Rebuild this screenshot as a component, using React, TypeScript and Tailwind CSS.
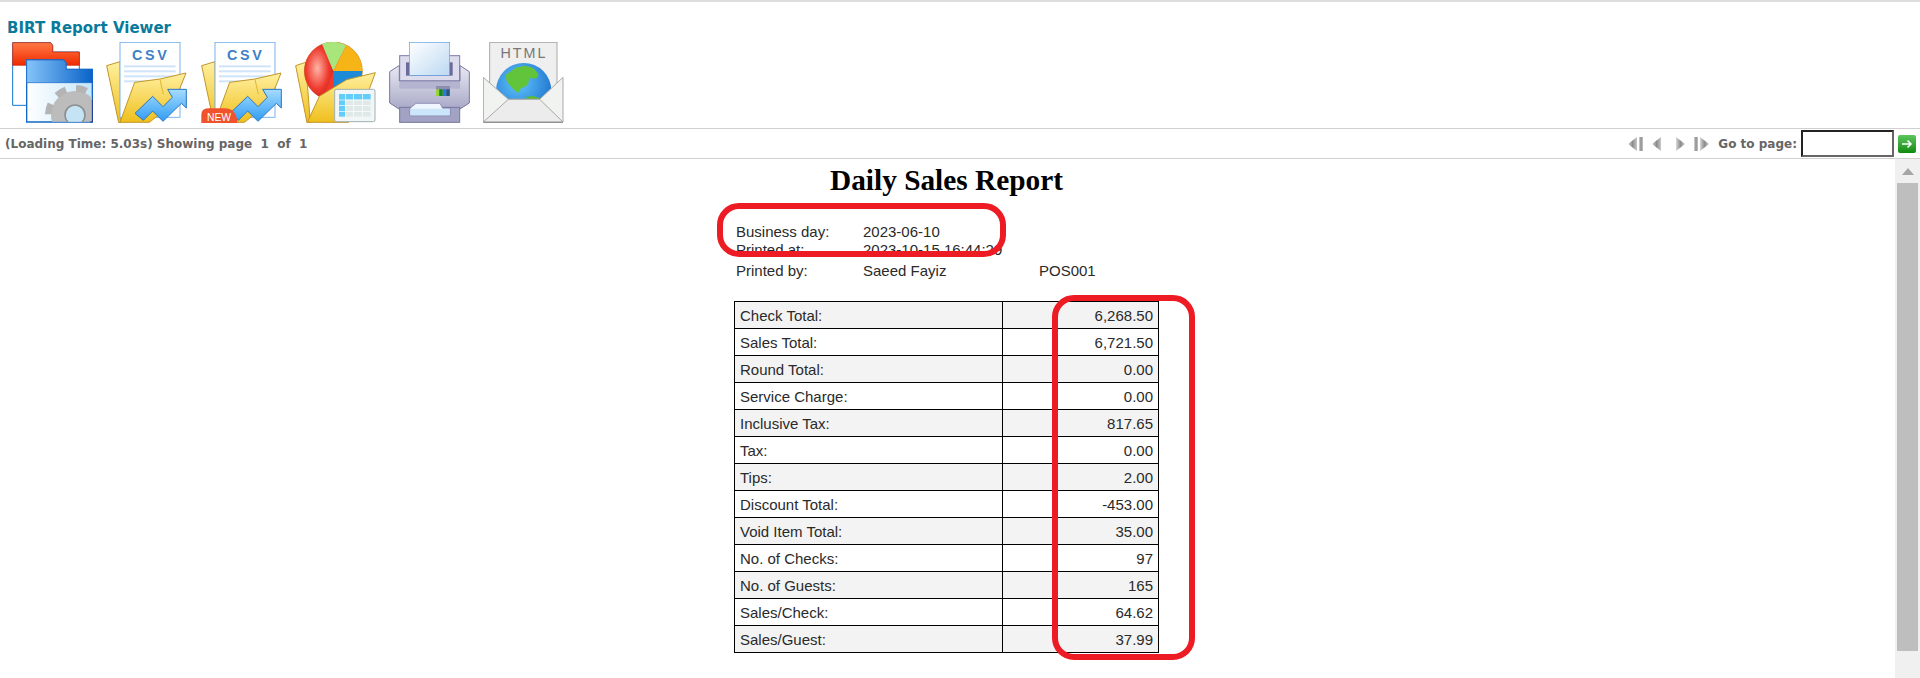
const rows = [
  ['Check Total:', '6,268.50'],
  ['Sales Total:', '6,721.50'],
  ['Round Total:', '0.00'],
  ['Service Charge:', '0.00'],
  ['Inclusive Tax:', '817.65'],
  ['Tax:', '0.00'],
  ['Tips:', '2.00'],
  ['Discount Total:', '-453.00'],
  ['Void Item Total:', '35.00'],
  ['No. of Checks:', '97'],
  ['No. of Guests:', '165'],
  ['Sales/Check:', '64.62'],
  ['Sales/Guest:', '37.99'],
]

const Defs = () => (
  <svg width="0" height="0" className="absolute">
    <defs>
      <linearGradient id="yellow" x1="0" y1="0" x2="0" y2="1">
        <stop offset="0" stopColor="#fff0a0" />
        <stop offset="1" stopColor="#efbf1c" />
      </linearGradient>
      <linearGradient id="red" x1="0" y1="0" x2="0" y2="1">
        <stop offset="0" stopColor="#ff7a45" />
        <stop offset="1" stopColor="#f02a00" />
      </linearGradient>
      <linearGradient id="blue" x1="0" y1="0" x2="1" y2="0">
        <stop offset="0" stopColor="#86c4fa" />
        <stop offset="1" stopColor="#0a63c8" />
      </linearGradient>
      <linearGradient id="pane" x1="0" y1="0" x2="1" y2="0">
        <stop offset="0" stopColor="#ffffff" />
        <stop offset="1" stopColor="#c5e6fb" />
      </linearGradient>
      <linearGradient id="arrow" x1="0" y1="0" x2="0" y2="1">
        <stop offset="0" stopColor="#a6dcff" />
        <stop offset="1" stopColor="#2f9cf2" />
      </linearGradient>
      <linearGradient id="paper" x1="0" y1="0" x2="1" y2="1">
        <stop offset="0" stopColor="#ffffff" />
        <stop offset="1" stopColor="#bcd9f2" />
      </linearGradient>
      <linearGradient id="printer" x1="0" y1="0" x2="0" y2="1">
        <stop offset="0" stopColor="#e8e8f2" />
        <stop offset="1" stopColor="#a9a9c8" />
      </linearGradient>
      <linearGradient id="navarrow" x1="0" y1="0" x2="1" y2="0">
        <stop offset="0" stopColor="#d8d8d8" />
        <stop offset="0.5" stopColor="#8c8c8c" />
        <stop offset="1" stopColor="#c8c8c8" />
      </linearGradient>
      <radialGradient id="globe" cx="0.4" cy="0.35" r="0.8">
        <stop offset="0" stopColor="#62c4ff" />
        <stop offset="1" stopColor="#0f62c0" />
      </radialGradient>
      <radialGradient id="pieRed" cx="0.45" cy="0.45" r="0.7">
        <stop offset="0" stopColor="#ffb4a6" />
        <stop offset="0.55" stopColor="#ee3a2e" />
        <stop offset="1" stopColor="#c01c12" />
      </radialGradient>
      <clipPath id="gearClip">
        <rect x="80" y="180" width="196" height="185" />
      </clipPath>
    </defs>
  </svg>
)

const FolderIcon = () => (
  <svg viewBox="36 126 243 243" className="w-[81px] h-[81px] shrink-0">
    <path d="M38 128h114l6 8v20h80v160H38z" fill="#fff" stroke="#1876d2" strokeWidth="3" />
    <path d="M38 128h114l6 8v20h80v40H38z" fill="url(#red)" stroke="#d62000" strokeWidth="2" />
    <path d="M80 180h110l8 8v20h79v158H80z" fill="url(#pane)" stroke="#1268c8" strokeWidth="4" />
    <path d="M80 180h110l8 8v20h79v40H80z" fill="url(#blue)" stroke="#1268c8" strokeWidth="2" />
    <g clipPath="url(#gearClip)">
      <circle cx="225" cy="345" r="72" fill="#bcbcbc" />
      <circle cx="225" cy="345" r="80" fill="none" stroke="#b4b4b4" strokeWidth="20" strokeDasharray="32 31" />
      <circle cx="225" cy="345" r="30" fill="#c4e4f6" stroke="#8f8f8f" strokeWidth="5" />
    </g>
    <path d="M270 366h7V300" fill="none" stroke="#263a8a" strokeWidth="3" />
  </svg>
)

const CsvIcon = ({ isNew }: { isNew?: boolean }) => (
  <svg viewBox="318 126 243 243" className="w-[81px] h-[81px] shrink-0">
    <path d="M320 197l40-12 2 183h-6z" fill="url(#yellow)" stroke="#c2962a" strokeWidth="3" />
    <rect x="360" y="127" width="180" height="225" fill="#fff" stroke="#78b4ee" strokeWidth="3" />
    <text x="452" y="180" textAnchor="middle" fontFamily="Liberation Sans" fontWeight="700" fontSize="43" letterSpacing="8" fill="#3f7fc8">
      CSV
    </text>
    {[196, 211, 226, 241].map((y) => (
      <rect key={y} x="372" y={y} width="155" height="6" fill="#cfe4f8" />
    ))}
    <path d="M360 367l44-120 76-10 78-18-36 90-74 58z" fill="url(#yellow)" stroke="#c2962a" strokeWidth="3" />
    <path d="M480 238l10 45" stroke="#e2b52e" strokeWidth="3" fill="none" />
    <path
      d="M405 340l53-51 31 31 28-28-14-24h56v56l-15-14-55 54-31-31-28 28z"
      fill="url(#arrow)"
      stroke="#2a76c0"
      strokeWidth="3"
    />
    {isNew && (
      <>
        <path d="M319 369v-24q0-20 20-20h50q36 0 38 44z" fill="#f0522e" />
        <text x="372" y="362" textAnchor="middle" fontFamily="Liberation Sans" fontSize="31" fill="#fff">
          NEW
        </text>
      </>
    )}
  </svg>
)

const ChartIcon = () => (
  <svg viewBox="45 126 243 243" className="w-[81px] h-[81px] shrink-0">
    <path d="M47 197l30-10 14 181h-10z" fill="url(#yellow)" stroke="#c2962a" strokeWidth="3" />
    <circle cx="160" cy="213" r="87" fill="#ee3a2e" stroke="#c09020" strokeWidth="2" />
    <path d="M160 213L128 132A87 87 0 0 0 73 213A87 87 0 0 0 130 295L160 213z" fill="url(#pieRed)" />
    <path d="M160 213L126 132A87 87 0 0 1 199 136z" fill="#a8e67c" />
    <path d="M160 213L199 136A87 87 0 0 1 247 213z" fill="#f6b416" />
    <path d="M160 213h87a87 87 0 0 1-24 60h-63z" fill="#1c8ad6" />
    <path d="M82 367l36-78 82-50 86-21-30 82-50 67z" fill="url(#yellow)" stroke="#c2962a" strokeWidth="3" />
    <rect x="164" y="268" width="121" height="97" rx="5" fill="#f3f6f6" stroke="#9fb0b2" strokeWidth="3" />
    <rect x="177" y="282" width="95" height="17" fill="#62cdfb" />
    <rect x="177" y="282" width="18" height="68" fill="#62cdfb" />
    <rect x="197" y="301" width="75" height="49" fill="#dfeae8" />
    {[195, 220, 246].map((x) => (
      <rect key={x} x={x} y="282" width="2" height="68" fill="#fff" />
    ))}
    {[299, 316, 333].map((y) => (
      <rect key={y} x="177" y={y} width="95" height="2" fill="#fff" />
    ))}
  </svg>
)

const PrinterIcon = () => (
  <svg viewBox="327 126 243 243" className="w-[81px] h-[81px] shrink-0">
    <rect x="359" y="167" width="180" height="76" fill="#dcdcec" stroke="#7d7dab" strokeWidth="3" />
    <rect x="378" y="187" width="140" height="40" fill="#6a6a9c" />
    <rect x="388" y="127" width="121" height="99" fill="url(#paper)" stroke="#5f9ee6" strokeWidth="2" />
    <path d="M329 215l28-18h1v46h182v-46l28 18v94l-28 18H357l-28-18z" fill="url(#printer)" stroke="#77779f" strokeWidth="3" />
    <rect x="358" y="246" width="182" height="20" fill="#b4b4d0" />
    <rect x="468" y="258" width="42" height="30" fill="#8e8eae" />
    <rect x="468" y="268" width="10" height="20" fill="#9ad23c" />
    <rect x="478" y="268" width="10" height="20" fill="#108a20" />
    <rect x="489" y="268" width="10" height="20" fill="#1d7ee0" />
    <rect x="499" y="268" width="10" height="20" fill="#2a5080" />
    <rect x="359" y="322" width="180" height="45" fill="#a2a2c4" stroke="#77779f" strokeWidth="3" />
    <path d="M390 347v-22l18-15h72l8 15h22v22z" fill="#f0f6ff" stroke="#6f6f9f" strokeWidth="2" />
    <rect x="391" y="326" width="118" height="20" fill="#cbe6fa" />
  </svg>
)

const HtmlIcon = () => (
  <svg viewBox="610 126 243 243" className="w-[81px] h-[81px] shrink-0">
    <rect x="630" y="127" width="202" height="200" fill="#efefef" stroke="#a9a9a9" strokeWidth="3" />
    <text x="733" y="175" textAnchor="middle" fontFamily="Liberation Sans" fontSize="43" letterSpacing="6" fill="#787878">
      HTML
    </text>
    <circle cx="732" cy="272" r="83" fill="url(#globe)" />
    <path d="M678 225l30-22 25-6 18 3 14 8 12 16-8 12-20-2-4 20-22 12-8 14-18-16-16-20z" fill="#62c43a" />
    <path d="M740 290l20-2 20 6-6 8h-34z" fill="#58bb36" />
    <path d="M611 232l75 66h94l70-66v134H611z" fill="#f1f3f1" stroke="#a8a8a8" strokeWidth="3" />
    <path d="M686 298l-75 68h239l-70-68z" fill="#ececec" stroke="#a8a8a8" strokeWidth="3" />
    <path d="M611 367h239" stroke="#8a8a8a" strokeWidth="3" />
  </svg>
)

const NavArrow = ({ dir, bar }: { dir: 'left' | 'right'; bar?: boolean }) => (
  <svg width={bar ? 16 : 11} height="16" viewBox={bar ? '0 0 16 16' : '0 0 11 16'} className="shrink-0">
    {dir === 'left' ? (
      bar ? (
        <>
          <path d="M10 1v14L1 8z" fill="url(#navarrow)" />
          <rect x="12" y="1" width="4" height="14" fill="url(#navarrow)" />
        </>
      ) : (
        <path d="M10 1v14L1 8z" fill="url(#navarrow)" />
      )
    ) : bar ? (
      <>
        <rect x="0" y="1" width="4" height="14" fill="url(#navarrow)" />
        <path d="M6 1v14l9-7z" fill="url(#navarrow)" />
      </>
    ) : (
      <path d="M1 1v14l9-7z" fill="url(#navarrow)" />
    )}
  </svg>
)

const App = () => {
  return (
    <div className="relative w-[1920px] h-[678px] overflow-hidden bg-white flex flex-col font-['Liberation_Sans',sans-serif]">
      <Defs />
      <div className="h-[2px] bg-[#dddddd] shrink-0" />

      {/* title + export toolbar */}
      <div className="h-[127px] border-b border-[#d0d0d0] pl-[7px] pt-[17px] shrink-0">
        <div className="text-[15px] leading-[18px] font-bold text-[#0a7a9c] font-['DejaVu_Sans',sans-serif]">BIRT Report Viewer</div>
        <div className="flex gap-[13.3px] pl-[5px] pt-[5px]">
          <FolderIcon />
          <CsvIcon />
          <CsvIcon isNew />
          <ChartIcon />
          <PrinterIcon />
          <HtmlIcon />
        </div>
      </div>

      {/* status + page nav */}
      <div className="h-[30px] border-b border-[#d0d0d0] shrink-0 flex items-center justify-between pl-[5px] text-[12px] font-bold text-[#666666] font-['DejaVu_Sans',sans-serif]">
        <span className="whitespace-pre">(Loading Time: 5.03s) Showing page  1  of  1</span>
        <div className="flex items-center">
          <div className="flex items-center">
            <NavArrow dir="left" bar />
            <span className="w-[8px]" />
            <NavArrow dir="left" />
            <span className="w-[13px]" />
            <NavArrow dir="right" />
            <span className="w-[8px]" />
            <NavArrow dir="right" bar />
          </div>
          <span className="ml-[8px] mr-[4px]">Go to page:</span>
          <div className="w-[93px] h-[27px] border-2 border-t-[#222222] border-l-[#222222] border-b-[#666666] border-r-[#666666]" />
          <div className="w-[18px] h-[18px] ml-[4px] mr-[4px] rounded-[2px] bg-gradient-to-b from-[#5cc65c] to-[#088a08] flex items-center justify-center">
            <svg width="12" height="12" viewBox="0 0 12 12" fill="none" stroke="#fff" strokeWidth="1.6">
              <path d="M1 6h9M6.500 2.500L10 6l-3.500 3.500" />
            </svg>
          </div>
        </div>
      </div>

      {/* report */}
      <div className="flex-1 flex min-h-0">
        <div className="flex-1 flex flex-col items-center overflow-hidden">
          <h1 className="text-[29.33px] leading-[34px] font-bold text-black font-['Liberation_Serif',serif] mt-[4px] pr-[2px]">Daily Sales Report</h1>
          <div className="w-[427px] text-[15px] text-[#2a2a2a]">
            <div className="grid grid-cols-[127px_176px_1fr] pl-[2px] pt-[25px] leading-[20px]">
              <span>Business day:</span>
              <span className="col-span-2">2023-06-10</span>
              <span className="h-[19px] leading-[16px]">Printed at:</span>
              <span className="col-span-2 h-[19px] leading-[16px]">2023-10-15 16:44:29</span>
              <span>Printed by:</span>
              <span>Saeed Fayiz</span>
              <span>POS001</span>
            </div>
            <table className="w-[425px] mt-[20px] border-collapse table-fixed">
              <tbody>
                {rows.map(([label, value], i) => (
                  <tr key={label} className={`h-[27px] ${i % 2 === 0 ? 'bg-[#f3f3f3]' : 'bg-white'}`}>
                    <td className="w-[268px] border border-black pl-[5px] pr-0 pt-[2px] pb-0">{label}</td>
                    <td className="border border-black pr-[5px] pl-0 pt-[2px] pb-0 text-right">{value}</td>
                  </tr>
                ))}
              </tbody>
            </table>
          </div>
        </div>

        {/* scrollbar */}
        <div className="w-[25px] bg-[#f0f0f0] flex flex-col items-center shrink-0">
          <div className="h-[24px] flex items-center justify-center w-full">
            <svg width="12" height="7" viewBox="0 0 12 7">
              <path d="M6 0l6 7H0z" fill="#a6a6a6" />
            </svg>
          </div>
          <div className="w-[21px] h-[468px] bg-[#bebebe]" />
        </div>
      </div>

      {/* red annotation marks */}
      <div className="absolute left-[717px] top-[203px] w-[289px] h-[54px] border-[6px] border-[#ed1c24] rounded-[22px]" />
      <div className="absolute left-[1052px] top-[295px] w-[143px] h-[365px] border-[6px] border-[#ed1c24] rounded-[22px]" />
    </div>
  )
}

export default App
